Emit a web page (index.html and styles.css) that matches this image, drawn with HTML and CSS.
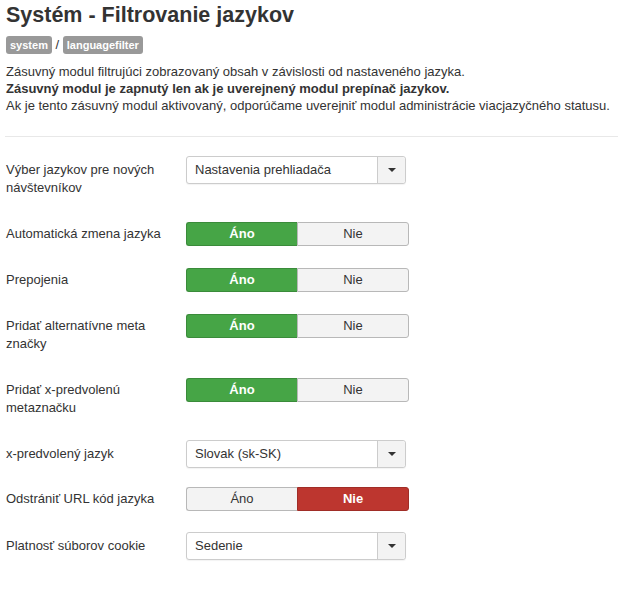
FILE: index.html
```html
<!DOCTYPE html>
<html lang="sk">
<head>
<meta charset="utf-8">
<title>Systém - Filtrovanie jazykov</title>
<link rel="stylesheet" href="styles.css">
</head>
<body>
<div class="page">
  <h1 class="title">Systém - Filtrovanie jazykov</h1>
  <div class="crumbs"><span class="badge">system</span> / <span class="badge">languagefilter</span></div>
  <div class="desc">
    <p>Zásuvný modul filtrujúci zobrazovaný obsah v závislosti od nastaveného jazyka.</p>
    <p><strong>Zásuvný modul je zapnutý len ak je uverejnený modul prepínač jazykov.</strong></p>
    <p>Ak je tento zásuvný modul aktivovaný, odporúčame uverejniť modul administrácie viacjazyčného statusu.</p>
  </div>
  <hr class="sep">
  <div class="form">
    <div class="row row-2l">
      <div class="label label-sel">Výber jazykov pre nových návštevníkov</div>
      <div class="select"><span class="select-value">Nastavenia prehliadača</span><span class="select-caret"><span class="caret"></span></span></div>
    </div>
    <div class="row">
      <div class="label label-tog">Automatická zmena jazyka</div>
      <div class="toggle"><span class="opt opt-yes">Áno</span><span class="opt">Nie</span></div>
    </div>
    <div class="row">
      <div class="label label-tog">Prepojenia</div>
      <div class="toggle"><span class="opt opt-yes">Áno</span><span class="opt">Nie</span></div>
    </div>
    <div class="row row-2l">
      <div class="label label-tog">Pridať alternatívne meta značky</div>
      <div class="toggle"><span class="opt opt-yes">Áno</span><span class="opt">Nie</span></div>
    </div>
    <div class="row row-2l-b">
      <div class="label label-tog">Pridať x-predvolenú metaznačku</div>
      <div class="toggle"><span class="opt opt-yes">Áno</span><span class="opt">Nie</span></div>
    </div>
    <div class="row row-sel">
      <div class="label label-sel">x-predvolený jazyk</div>
      <div class="select"><span class="select-value">Slovak (sk-SK)</span><span class="select-caret"><span class="caret"></span></span></div>
    </div>
    <div class="row row-tog-b">
      <div class="label label-tog">Odstrániť URL kód jazyka</div>
      <div class="toggle"><span class="opt">Áno</span><span class="opt opt-no">Nie</span></div>
    </div>
    <div class="row">
      <div class="label label-sel">Platnosť súborov cookie</div>
      <div class="select"><span class="select-value">Sedenie</span><span class="select-caret"><span class="caret"></span></span></div>
    </div>
  </div>
</div>
</body>
</html>
```

FILE: styles.css
```css
* { box-sizing: border-box; }
html, body { margin: 0; padding: 0; background: #fff; }
body {
  font-family: "Liberation Sans", Arial, sans-serif;
  font-size: 13px;
  line-height: 18px;
  color: #333;
}
.page { padding: 3px 0 0 6px; }
.title {
  margin: 0;
  font-size: 21.5px;
  line-height: 24px;
  font-weight: bold;
  color: #333;
}
.crumbs {
  margin-top: 9px;
  height: 18px;
  line-height: 18px;
  color: #333;
}
.badge {
  display: inline-block;
  height: 18px;
  padding: 2px 4px;
  font-size: 11px;
  line-height: 14px;
  font-weight: bold;
  color: #fff;
  background: #999;
  border-radius: 3px;
  vertical-align: top;
}
.desc { margin-top: 9px; line-height: 17px; }
.desc p { margin: 0; }
.sep {
  margin: 22px 0 0 -1px;
  border: 0;
  border-top: 1px solid #e8e8e8;
  height: 0;
}
.form { padding-top: 19px; }
.row { display: flex; align-items: flex-start; margin-bottom: 22px; }
.row-2l { margin-bottom: 25px; }
.row-2l-b { margin-bottom: 23px; }
.row-sel { margin-bottom: 19px; }
.row-tog-b { margin-bottom: 21px; }
.label { width: 160px; margin-right: 20px; line-height: 18px; }
.label-sel { padding-top: 5px; }
.label-tog { padding-top: 3px; }
.select {
  display: flex;
  width: 220px;
  height: 28px;
  border: 1px solid #ccc;
  border-radius: 3px;
  background: #fff;
  box-shadow: 0 1px 1px rgba(0,0,0,0.05);
}
.select-value { flex: 1; padding: 4px 0 0 8px; line-height: 18px; color: #333; }
.select-caret {
  width: 28px;
  display: flex;
  align-items: center;
  justify-content: center;
  border-left: 1px solid #ccc;
  background: #f3f3f3;
  border-radius: 0 3px 3px 0;
}
.caret {
  width: 0; height: 0;
  border-left: 4px solid transparent;
  border-right: 4px solid transparent;
  border-top: 4px solid #333;
}
.toggle {
  display: flex;
  width: 223px;
  height: 24px;
}
.opt {
  flex: 1;
  text-align: center;
  line-height: 22px;
  background: #f3f3f3;
  border: 1px solid #b8b8b8;
  color: #333;
}
.opt:first-child { border-radius: 3px 0 0 3px; border-right: 0; }
.opt:last-child { border-radius: 0 3px 3px 0; }
.opt-yes {
  background: #46a546;
  border-color: #3a8b3a;
  color: #fff;
  font-weight: bold;
}
.opt-no {
  background: #bd362f;
  border-color: #a02d27;
  color: #fff;
  font-weight: bold;
}
```
